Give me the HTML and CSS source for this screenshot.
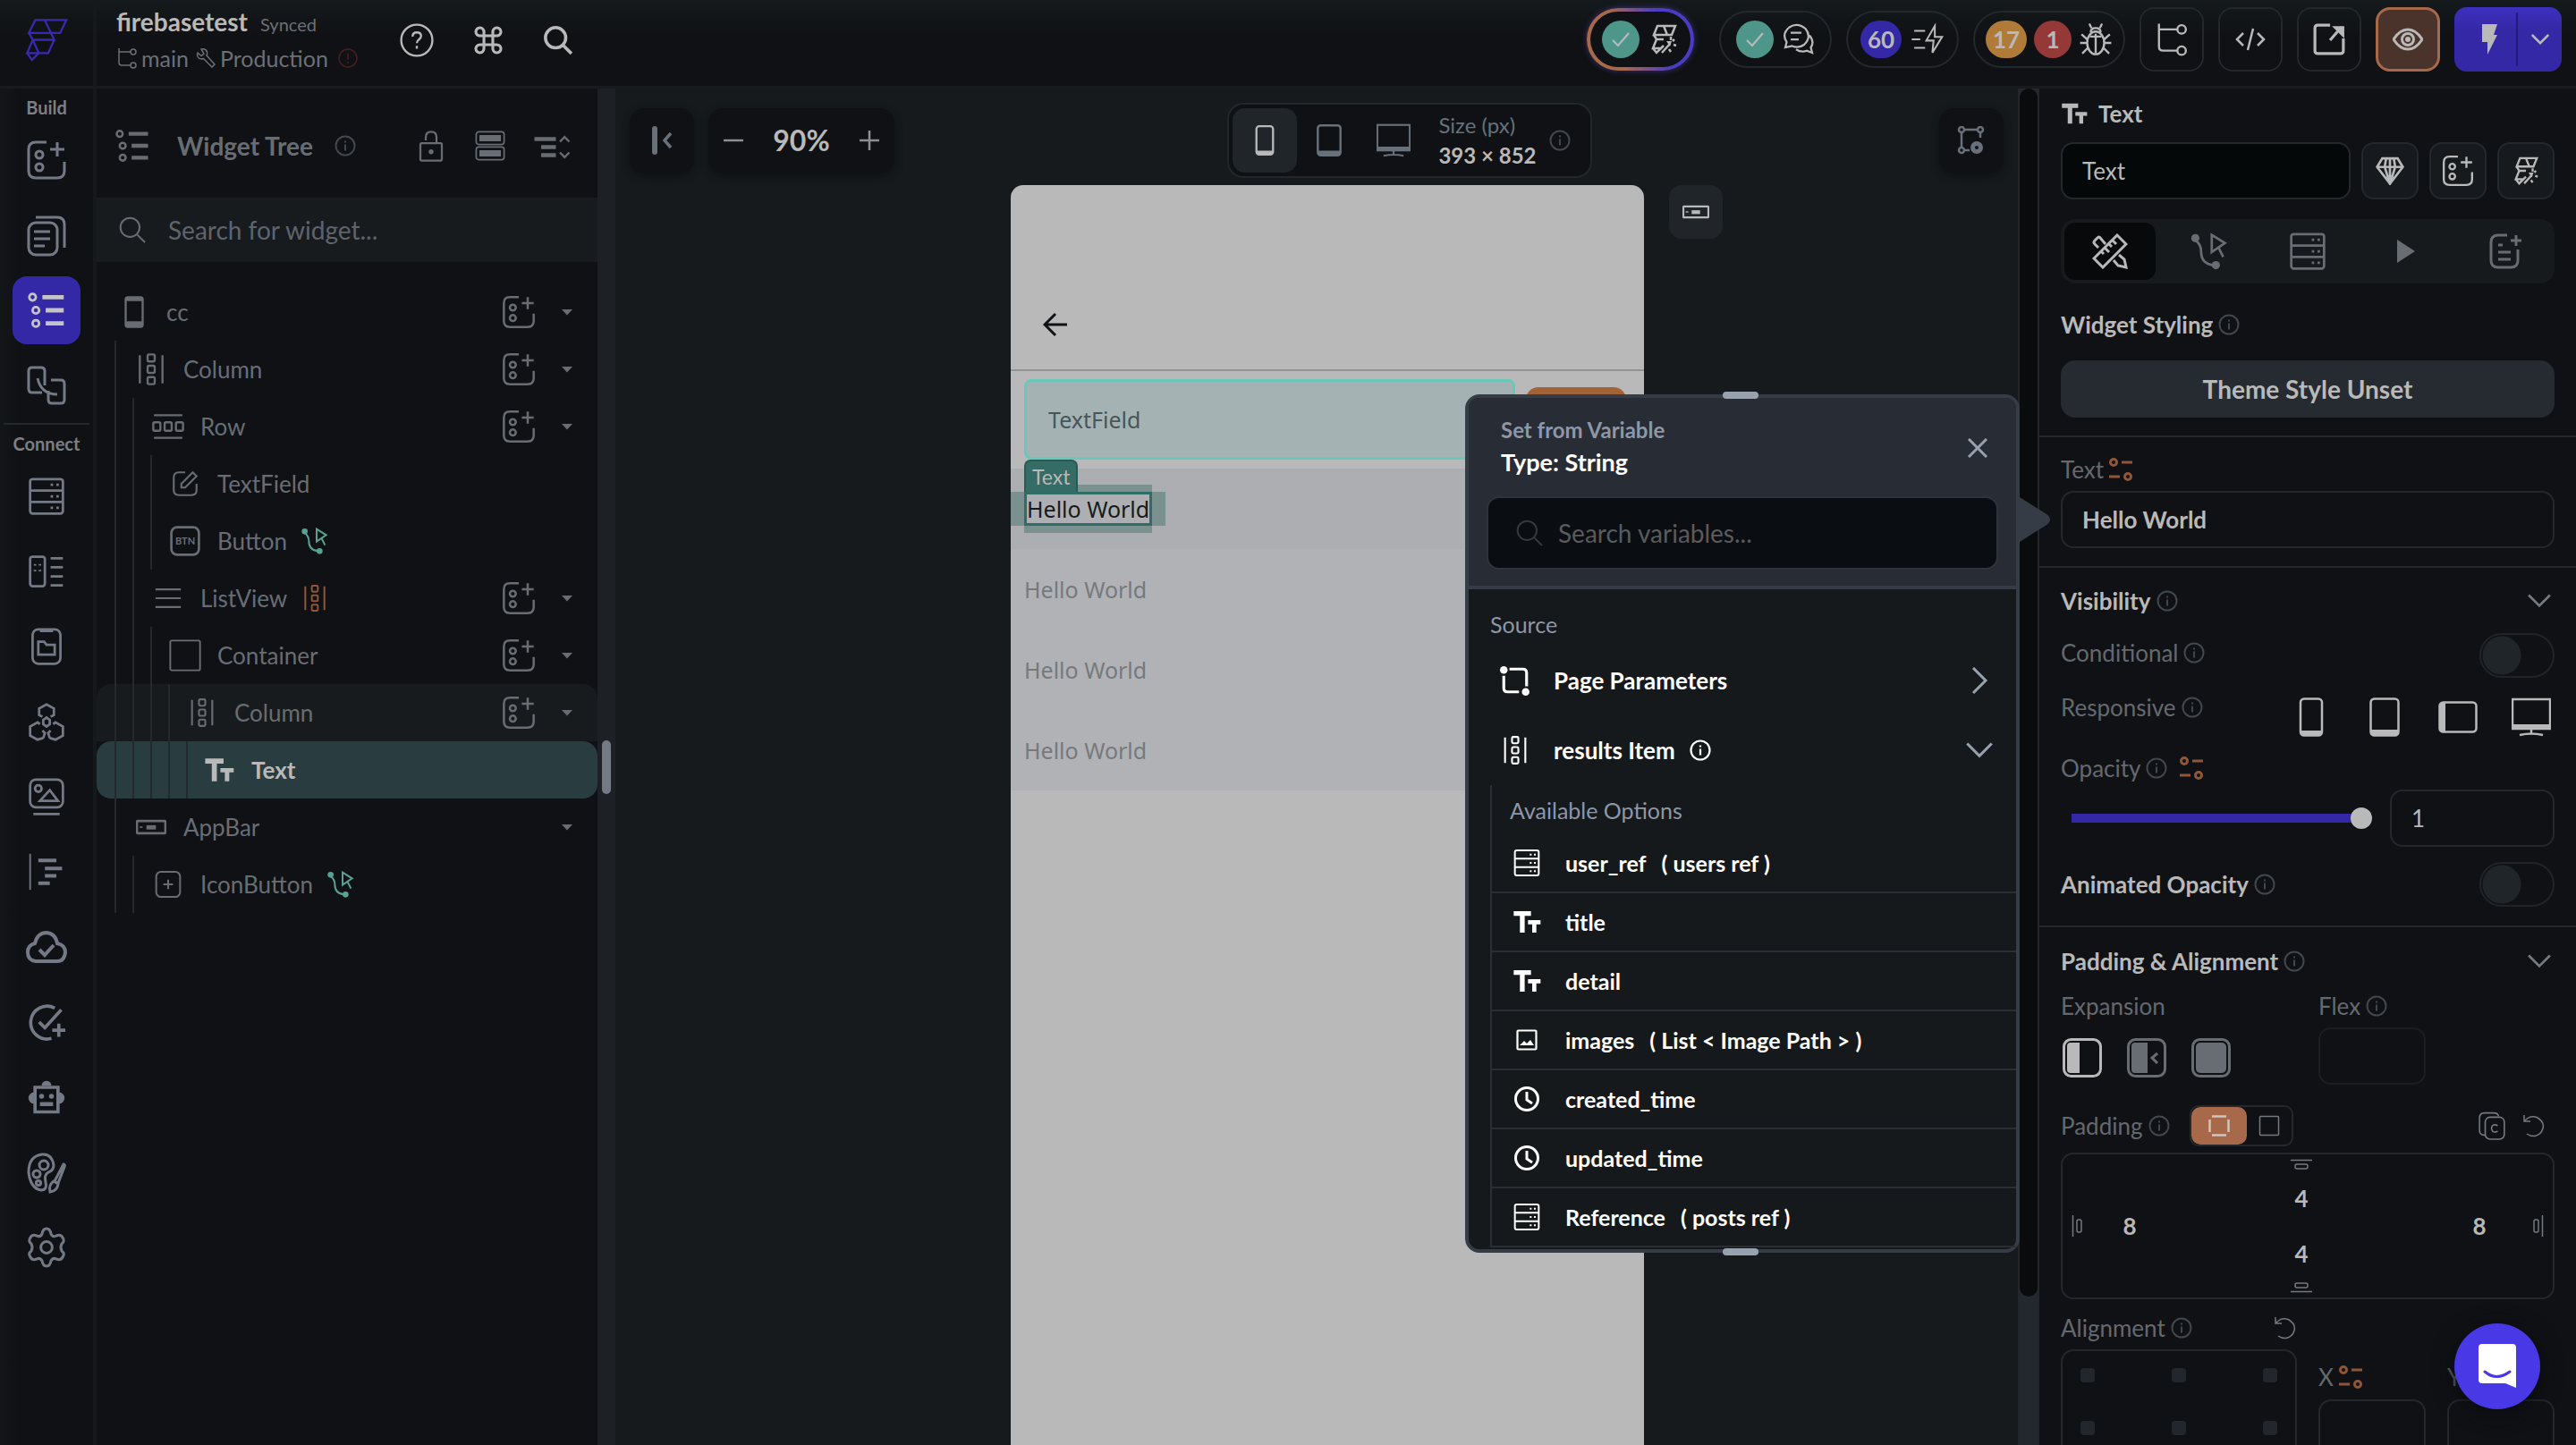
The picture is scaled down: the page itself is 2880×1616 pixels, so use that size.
FILE: index.html
```html
<!DOCTYPE html>
<html lang="en">
<head>
<meta charset="utf-8">
<title>firebasetest</title>
<link rel="stylesheet" href="styles.css">
</head>
<body>
<svg class="sprite" aria-hidden="true">
  <symbol id="logo" viewBox="0 0 48 50"><path d="M11 1.5H47L40 16.5H3.5ZM22 1.5L33 24.5H8L3.5 16.5M33 24.5L26 40H1.5L8 24.5L15 40M1.5 40L7 48L15 40" stroke-width="2.4"/></symbol>
  <symbol id="branch" viewBox="0 0 24 24"><path d="M3 1V17Q3 20 6 20H16M3 5H16"/><circle cx="19" cy="5" r="3"/><circle cx="19" cy="20" r="3"/></symbol>
  <symbol id="wrench" viewBox="0 0 24 24"><path d="M7 2Q12 1 13.500 5Q14 8 13 9L22 19L19 22L9.500 12.500Q5 14 3 10.500Q2 8 3 6L7 9.500L10 7Z"/></symbol>
  <symbol id="alert" viewBox="0 0 24 24"><circle cx="12" cy="12" r="10"/><path d="M12 6.500V14M12 16V18"/></symbol>
  <symbol id="info" viewBox="0 0 24 24"><circle cx="12" cy="12" r="10.500"/><path d="M12 10.500V17.500M12 6.500V8.500"/></symbol>
  <symbol id="help" viewBox="0 0 24 24"><circle cx="12" cy="12" r="11"/><path d="M9 9.500Q9 6.500 12 6.500Q15 6.500 15 9Q15 10.500 13.500 11.500Q12 12.500 12 14M12 16V18"/></symbol>
  <symbol id="cmd" viewBox="0 0 24 24"><path d="M8.500 8.500H15.500V15.500H8.500ZM8.500 8.500H5.500A3.200 3.200 0 1 1 8.500 5.500ZM15.500 8.500V5.500A3.200 3.200 0 1 1 18.500 8.500ZM15.500 15.500H18.500A3.200 3.200 0 1 1 15.500 18.500ZM8.500 15.500V18.500A3.200 3.200 0 1 1 5.500 15.500Z"/></symbol>
  <symbol id="search" viewBox="0 0 24 24"><circle cx="10" cy="10" r="8"/><path d="M16 16L22.500 22.500"/></symbol>
  <symbol id="add-widget" viewBox="0 0 24 24"><path d="M12 2H6Q2 2 2 6V18Q2 22 6 22H18Q22 22 22 18V13M18 2V10M14 6H22"/><circle cx="8" cy="9" r="2"/><circle cx="8" cy="16" r="2"/></symbol>
  <symbol id="pages" viewBox="0 0 24 24"><rect x="2" y="5" width="16" height="18" rx="4"/><path d="M5 10H14M5 14H14M5 18H11M6 2H18Q22 2 22 6V19"/></symbol>
  <symbol id="tree" viewBox="0 0 24 24"><circle cx="3.500" cy="4" r="2"/><circle cx="5.500" cy="12" r="2"/><circle cx="5.500" cy="20" r="2"/><path stroke-width="2.600" d="M9.500 4H22.500M11.500 12H22.500M11.500 20H22.500"/></symbol>
  <symbol id="flow" viewBox="0 0 24 24"><path d="M9.500 16H4Q2 16 2 14V4Q2 2 4 2H9Q11 2 11 4V12M14.500 9H20Q22 9 22 11V20Q22 22 20 22H15Q13 22 13 20V15M7 8Q9 17 18 17"/></symbol>
  <symbol id="db" viewBox="0 0 24 24"><rect x="2" y="1.500" width="20" height="21" rx="1.500"/><path d="M2 8.500H22M2 15.500H22M14.500 5H16M18 5H19.500M14.500 12H16M18 12H19.500M14.500 19H16M18 19H19.500"/></symbol>
  <symbol id="schema" viewBox="0 0 24 24"><rect x="2" y="3" width="9" height="18" rx="1.500"/><path d="M14.500 4H22M14.500 9.500H22M14.500 15H22M14.500 20.500H22M5 7.500V8.500M8 7.500V8.500M5 11V12M8 11V12"/></symbol>
  <symbol id="files" viewBox="0 0 24 24"><rect x="3.500" y="1.500" width="17" height="21" rx="3.500"/><path d="M8 2.500H16M7 9H10.500L12 11H17V17H7Z"/></symbol>
  <symbol id="hex" viewBox="0 0 24 24"><path d="M9.500 9L7.500 8V4L12 1.500L16.500 4V8L14.500 9M12 9.500L14 11V13.500L12 15L10 13.500V11ZM10 22L6.500 23L2 20.500V15L6.500 12.500L8 13.500M14 22L17.500 23L22 20.500V15L17.500 12.500L16 13.500M10 22L11 19L9.500 17.500M14 22L13 19L14.500 17.500"/></symbol>
  <symbol id="media" viewBox="0 0 24 24"><rect x="2" y="1.500" width="20" height="17" rx="3.500"/><circle cx="7" cy="7" r="2"/><path d="M8 14.500L14 8L19 14.500ZM4 22.500H20"/></symbol>
  <symbol id="locale" viewBox="0 0 24 24"><path stroke-width="1" d="M2 1V23"/><path d="M7 5H18M11 10H21.500M11 14.500H18M7 19H14"/></symbol>
  <symbol id="cloud" viewBox="0 0 24 24"><path stroke-width="2" d="M6 20Q1.500 19.500 1.500 15Q1.500 11 5.500 10Q7 4 12 4Q17 4.500 18 10Q22.500 11 22.500 15Q22 20 18 20ZM8 13.500L11 16.500L16 11"/></symbol>
  <symbol id="task" viewBox="0 0 24 24"><path stroke-width="2" d="M17 3.500A10 10 0 1 0 15 22M7.500 12L11 15.500L21 4.500M19.500 13V21M15.500 17H23.500"/></symbol>
  <symbol id="robot" viewBox="0 0 24 24"><path stroke-width="2" d="M5 6H19V21H5Z"/><path class="f" d="M9 5A3 3 0 0 1 15 5ZM4.500 9A3.500 3.500 0 0 0 4.500 16ZM19.500 9A3.500 3.500 0 0 1 19.500 16ZM8 15H16V17.500H8Z"/><circle class="f" cx="9" cy="11.500" r="1.500"/><circle class="f" cx="15" cy="11.500" r="1.500"/></symbol>
  <symbol id="palette" viewBox="0 0 24 24"><path d="M16 8Q15 1.500 9.500 2Q2 3 2 12Q3 21 9 22Q12.500 22 11.500 17.500Q10.500 13.500 13 12Q16 11 16 8ZM21.500 7.500Q22.500 7.500 22 9L18.500 18L16.500 17ZM16 17Q13 19 14 23Q18 22.500 18.500 18.500Z"/><circle cx="10.500" cy="8" r="2.500"/><circle cx="6.500" cy="13" r="2"/><circle cx="7.500" cy="18" r="1.300"/></symbol>
  <symbol id="gear" viewBox="0 0 24 24"><circle cx="12" cy="12" r="3.200"/><path d="M9.500 4.500Q10 1.500 12 1.500Q14 1.500 14.500 4.500Q15.500 6.500 17.500 5.500Q20 4.500 21 6.500Q22.500 8.500 20.500 10Q19.500 12 20.500 14Q22.500 15.500 21 17.500Q20 19.500 17.500 18.500Q15.500 17.500 14.500 19.500Q14 22.500 12 22.500Q10 22.500 9.500 19.500Q8.500 17.500 6.500 18.500Q4 19.500 3 17.500Q1.500 15.500 3.500 14Q4.500 12 3.500 10Q1.500 8.500 3 6.500Q4 4.500 6.500 5.500Q8.500 6.500 9.500 4.500Z"/></symbol>
  <symbol id="lock" viewBox="0 0 24 24"><rect x="4" y="10" width="16" height="13" rx="1"/><path d="M8 8V5.500Q8 1.500 12 1.500Q16 1.500 16 5.500V10"/><circle class="f" cx="12" cy="16.500" r="1.800"/></symbol>
  <symbol id="stack" viewBox="0 0 24 24"><rect x="1" y="1" width="22" height="10" rx="2"/><rect x="1" y="13" width="22" height="10" rx="2"/><path class="f" d="M3.500 3.500H20.500V8.500H3.500ZM3.500 15.500H20.500V20.500H3.500Z"/></symbol>
  <symbol id="collapse" viewBox="0 0 28 20"><path d="M1 5H17M6 11H17M6 17H17"/><path stroke-width="1.600" d="M20 7L23.500 3.500L27 7M20 15L23.500 18.500L27 15"/></symbol>
  <symbol id="phone-s" viewBox="0 0 24 24"><rect x="6" y="1.500" width="12" height="21" rx="1.500"/><path d="M6 3H18" stroke-width="2.500"/><path d="M6 20.500H18" stroke-width="4"/></symbol>
  <symbol id="col" viewBox="0 0 24 24"><path d="M4 2V22M20 2V22"/><rect x="9.500" y="1.500" width="5" height="5" rx="1"/><rect x="9.500" y="9.500" width="5" height="5" rx="1"/><rect x="9.500" y="17.500" width="5" height="5" rx="1"/></symbol>
  <symbol id="row" viewBox="0 0 24 24"><path d="M2 4H22M2 20H22"/><rect x="1.500" y="9" width="5" height="6" rx="1"/><rect x="9.500" y="9" width="5" height="6" rx="1"/><rect x="17.500" y="9" width="5" height="6" rx="1"/></symbol>
  <symbol id="edit" viewBox="0 0 24 24"><path d="M12 3H7Q3 3 3 7V17Q3 21 7 21H17Q21 21 21 17V12M9 12L18 3L21 6L12 15H9Z"/></symbol>
  <symbol id="btn" viewBox="0 0 32 32"><rect x="1.500" y="1.500" width="29" height="29" rx="6"/></symbol>
  <symbol id="action" viewBox="0 0 24 24"><circle class="f" cx="3.500" cy="4" r="2.500"/><circle class="f" cx="16" cy="20.500" r="2.500"/><path d="M3.500 5Q7 8 7 12Q7 20 15 20.500M13.500 2L21.500 7L13.500 12.500ZM17.500 9.500L20.500 15.500"/></symbol>
  <symbol id="list" viewBox="0 0 24 24"><path d="M2 5H22M2 12H22M2 19H22"/></symbol>
  <symbol id="box" viewBox="0 0 24 24"><rect x="1.500" y="1.500" width="21" height="21" rx="1"/></symbol>
  <symbol id="tt" viewBox="0 0 24 24"><path class="f" d="M1 3H15.500V7H10.200V21H6.200V7H1ZM13 10.500H23.500V14H20V21H16.500V14H13Z"/></symbol>
  <symbol id="appbar" viewBox="0 0 32 16"><rect x="1" y="1.500" width="30" height="13" rx="1"/><path class="f" d="M11 6H21V10.500H11Z"/><path stroke-width="1.500" d="M4 8H7"/></symbol>
  <symbol id="plusbox" viewBox="0 0 24 24"><rect x="2" y="1.500" width="20" height="21" rx="4"/><path d="M12 8V16M8 12H16"/></symbol>
  <symbol id="caret" viewBox="0 0 12 8"><path class="f" d="M0 1H12L6 7.500Z"/></symbol>
  <symbol id="left" viewBox="0 0 24 34"><path stroke-width="6" stroke-linecap="round" d="M4 4V30"/><path stroke-width="3.500" d="M22 9L15 17L22 25"/></symbol>
  <symbol id="minus" viewBox="0 0 24 24"><path d="M1 12H23"/></symbol>
  <symbol id="plus" viewBox="0 0 24 24"><path d="M1 12H23M12 1V23"/></symbol>
  <symbol id="phone" viewBox="0 0 28 44"><rect x="2" y="1.500" width="24" height="41" rx="4"/><path class="f" d="M2 37H26V40Q26 43 23 43H5Q2 43 2 40Z"/></symbol>
  <symbol id="tablet" viewBox="0 0 34 44"><rect x="1.500" y="1.500" width="31" height="41" rx="4"/><path class="f" d="M1.500 36H32.500V39Q32 43 29 43H5Q2 43 1.500 39Z"/></symbol>
  <symbol id="land" viewBox="0 0 44 36"><rect x="1.500" y="1.500" width="41" height="33" rx="4"/><path class="f" d="M8 1.500V34.500H5Q1.500 34 1.500 31V5Q1.500 2 5 1.500Z"/></symbol>
  <symbol id="desk" viewBox="0 0 44 42"><rect x="1" y="1" width="42" height="33"/><path class="f" d="M1 29H43V34H1Z"/><path d="M22 34V39M9 41Q22 38 35 41"/></symbol>
  <symbol id="nodes" viewBox="0 0 30 32"><circle cx="4" cy="4" r="3"/><circle cx="25" cy="4" r="3"/><circle cx="4" cy="27" r="3"/><path d="M7 4H22M4 7V24M25 7V13M7 27H13"/><circle cx="21" cy="24" r="4.500" stroke-width="5"/></symbol>
  <symbol id="back" viewBox="0 0 28 28"><path d="M27 14H2M14 2L2 14L14 26"/></symbol>
  <symbol id="check" viewBox="0 0 24 24"><path d="M3 13L9 19L21 5"/></symbol>
  <symbol id="ai" viewBox="0 0 30 34"><path d="M8 2H28L24 12H4ZM15 2L19 12M4 12L7 17H15M7 17L3 27H13M3 27L7 32L15 24M13 32L22 22M23 14V18M27 17L25 19M26 23L29 24M21 28L23 31"/><path class="f" d="M18 19L24 19L22 25Z"/></symbol>
  <symbol id="chat" viewBox="0 0 24 24"><path d="M2 18L3 14Q-1 8 5 3Q11 -1 17 4Q22 10 16 16Q12 19 7 17ZM6 7H14M6 12H12M20 9Q24 14 21 18L22 22L18 20.500Q14 22 10 19.500"/></symbol>
  <symbol id="speed" viewBox="0 0 28 24"><path d="M1 12H8M3 5H12M3 19H12M20 1L13 13H19L18 23L26 10H20Z"/></symbol>
  <symbol id="bug" viewBox="0 0 24 24"><ellipse cx="12" cy="14.500" rx="6" ry="8"/><path d="M12 8V22M8.500 7Q8.500 4 12 4Q15.500 4 15.500 7M9 4L7.500 1M15 4L16.500 1M6 12L2 8.500M18 12L22 8.500M1 14.500H6M18 14.500H23M6.500 18L2.500 22M17.500 18L21.500 22M8 10H16"/></symbol>
  <symbol id="code" viewBox="0 0 34 26"><path d="M9 6L2 13L9 20M25 6L32 13L25 20M20 1L14 25"/></symbol>
  <symbol id="open" viewBox="0 0 34 34"><path d="M18 2H5Q2 2 2 5V29Q2 32 5 32H29Q32 32 32 29V16M18 18L30 4"/><path class="f" d="M20 3H33V16Z"/></symbol>
  <symbol id="eye" viewBox="0 0 34 24"><path d="M1 12Q8 1 17 1Q26 1 33 12Q26 23 17 23Q8 23 1 12Z"/><circle cx="17" cy="12" r="6.500"/><circle class="f" cx="17" cy="12" r="3"/></symbol>
  <symbol id="bolt" viewBox="0 0 20 34"><path class="f" d="M2 0H19L15 12H19L8 34V20H2Z"/></symbol>
  <symbol id="down" viewBox="0 0 24 14"><path d="M1 1L12 12L23 1"/></symbol>
  <symbol id="right" viewBox="0 0 18 30"><path d="M2 1L16 15L2 29"/></symbol>
  <symbol id="gem" viewBox="0 0 30 30"><path d="M7 2H23L28.500 11L15 28.500L1.500 11ZM1.500 11H28.500M11 2L9.500 11L15 28.500L20.500 11L19 2M15 2V28"/></symbol>
  <symbol id="design" viewBox="0 0 40 40"><path d="M28 2L38 12L12 38L2 28ZM10 20L13 23M14 16L19 21M19 12L22 15M23 8L27 12M15 12L9 5Q8 3 6 5L3 8Q1 10 3 12L7 16M30 24L36 29L38 38L29 36L24 30"/></symbol>
  <symbol id="play" viewBox="0 0 20 28"><path class="f" d="M0 1L20 14L0 27Z"/></symbol>
  <symbol id="notes" viewBox="0 0 36 40"><path d="M20 2H10Q2 2 2 10V30Q2 38 10 38H24Q32 38 32 30V18M30 2V14M24 8H36M10 13H15M10 21H24M10 29H24"/></symbol>
  <symbol id="vars" viewBox="0 0 26 26"><circle cx="5" cy="5" r="3.500"/><circle cx="21" cy="21" r="3.500"/><path d="M14 5H26M0 21H12"/></symbol>
  <symbol id="close" viewBox="0 0 22 22"><path d="M1 1L21 21M21 1L1 21"/></symbol>
  <symbol id="params" viewBox="0 0 32 32"><circle class="f" cx="4" cy="5" r="4"/><circle class="f" cx="27" cy="28" r="4"/><path d="M10 4H24Q28 4 28 8V22M4 11V24Q4 28 8 28H20"/></symbol>
  <symbol id="image" viewBox="0 0 24 24"><rect x="1.500" y="1.500" width="21" height="21" rx="1"/><path class="f" d="M4 18L9 13L12 16L16 12L20 18Z"/></symbol>
  <symbol id="clock" viewBox="0 0 28 28"><circle cx="14" cy="14" r="12.500"/><path d="M14 6V15L20 19"/></symbol>
  <symbol id="exp-a" viewBox="0 0 44 44"><rect x="1.500" y="1.500" width="41" height="41" rx="8"/><path class="f" d="M9 5H19V39H9Q5 39 5 35V9Q5 5 9 5Z"/></symbol>
  <symbol id="exp-b" viewBox="0 0 44 44"><rect x="1.500" y="1.500" width="41" height="41" rx="8"/><path class="f" d="M9 5H23V39H9Q5 39 5 35V9Q5 5 9 5Z"/><path d="M34 17L28 22L34 28"/></symbol>
  <symbol id="exp-c" viewBox="0 0 44 44"><rect x="1.500" y="1.500" width="41" height="41" rx="8"/><rect class="f" x="5" y="5" width="34" height="34" rx="5"/></symbol>
  <symbol id="sides" viewBox="0 0 24 24"><path stroke-width="2.500" d="M4 1.500H20M4 22.500H20M1.500 5V19M22.500 5V19"/></symbol>
  <symbol id="copy" viewBox="0 0 30 30"><rect x="8" y="6" width="20" height="23" rx="5"/><path d="M8 25Q2 25 2 20V7Q2 1.500 7 1.500H17Q21 1.500 22 5M21 15Q18 13 15.500 15Q13.500 18 16 21Q18.500 22.500 21 20.500"/></symbol>
  <symbol id="undo" viewBox="0 0 24 26"><path d="M1 1V8H8M1 8Q8 0 16 4Q24 9 22 16Q20 23 13 24.500Q8 25 4 22"/></symbol>
  <symbol id="pad" viewBox="0 0 24 12"><path d="M0 1.500H24"/><rect x="5" y="6" width="14" height="5" rx="2"/></symbol>
  <symbol id="intercom" viewBox="0 0 42 50"><path class="f" d="M4 0H38Q42 0 42 4V49L30 44H4Q0 44 0 40V4Q0 0 4 0Z"/><path class="smile" d="M7 31Q20 42 35 31"/></symbol>
</svg>

<header class="topbar">
  <a class="logo" href="#" aria-label="Home"><svg class="i48"><use href="#logo"/></svg></a>
  <div class="project">
    <div class="line"><h1>firebasetest</h1><span class="synced">Synced</span></div>
    <div class="line sub"><svg class="i24"><use href="#branch"/></svg><span>main</span><svg class="i24"><use href="#wrench"/></svg><span>Production</span><svg class="i24 warn"><use href="#alert"/></svg></div>
  </div>
  <nav class="tools">
    <button aria-label="Help"><svg class="i38"><use href="#help"/></svg></button>
    <button aria-label="Commands"><svg class="i34 heavy"><use href="#cmd"/></svg></button>
    <button aria-label="Search"><svg class="i34 raw"><use href="#search"/></svg></button>
  </nav>
  <div class="status">
    <button class="pill glow" aria-label="AI"><span class="dot teal"><svg class="i24 heavy"><use href="#check"/></svg></span><svg class="i34 raw"><use href="#ai"/></svg></button>
    <button class="pill" aria-label="Comments"><span class="dot teal"><svg class="i24 heavy"><use href="#check"/></svg></span><svg class="i36"><use href="#chat"/></svg></button>
    <button class="pill"><span class="dot blue">60</span><svg class="i38"><use href="#speed"/></svg></button>
    <button class="pill wide"><span class="dot orange">17</span><span class="dot red">1</span><svg class="i38"><use href="#bug"/></svg></button>
    <button class="sq" aria-label="Branch"><svg class="i38"><use href="#branch"/></svg></button>
    <button class="sq" aria-label="Code"><svg class="i34 raw"><use href="#code"/></svg></button>
    <button class="sq" aria-label="Open"><svg class="i36 raw3"><use href="#open"/></svg></button>
    <button class="sq eye" aria-label="Preview"><svg class="i34 raw3"><use href="#eye"/></svg></button>
    <div class="run"><button aria-label="Run"><svg class="i34"><use href="#bolt"/></svg></button><button class="more" aria-label="More"><svg class="i20 raw3"><use href="#down"/></svg></button></div>
  </div>
</header>

<main class="workspace">
  <nav class="rail">
    <h2>Build</h2>
    <button aria-label="Add widget"><svg class="i48"><use href="#add-widget"/></svg></button>
    <button aria-label="Pages"><svg class="i48"><use href="#pages"/></svg></button>
    <button aria-label="Widget tree" class="on"><span><svg class="i44"><use href="#tree"/></svg></span></button>
    <button aria-label="Storyboard"><svg class="i48"><use href="#flow"/></svg></button>
    <hr>
    <h2>Connect</h2>
    <button aria-label="Firestore"><svg class="i44"><use href="#db"/></svg></button>
    <button aria-label="Data types"><svg class="i44"><use href="#schema"/></svg></button>
    <button aria-label="App state"><svg class="i44"><use href="#files"/></svg></button>
    <button aria-label="API"><svg class="i44"><use href="#hex"/></svg></button>
    <button aria-label="Media"><svg class="i44"><use href="#media"/></svg></button>
    <button aria-label="Functions"><svg class="i44 heavy"><use href="#locale"/></svg></button>
    <button aria-label="Cloud"><svg class="i48"><use href="#cloud"/></svg></button>
    <button aria-label="Tests"><svg class="i44"><use href="#task"/></svg></button>
    <button aria-label="Agents"><svg class="i44"><use href="#robot"/></svg></button>
    <button aria-label="Theme"><svg class="i48"><use href="#palette"/></svg></button>
    <button aria-label="Settings"><svg class="i48"><use href="#gear"/></svg></button>
  </nav>

  <section class="treepanel">
    <div class="treehead">
      <svg class="i40"><use href="#tree"/></svg><h2>Widget Tree</h2><svg class="i24 dim"><use href="#info"/></svg>
      <div class="treeacts"><button aria-label="Lock"><svg class="i36"><use href="#lock"/></svg></button><button aria-label="Density"><svg class="i34 thin"><use href="#stack"/></svg></button><button aria-label="Collapse all"><svg class="i42 raw3"><use href="#collapse"/></svg></button></div>
    </div>
    <label class="treesearch"><svg class="i32"><use href="#search"/></svg><input type="text" placeholder="Search for widget..." aria-label="Search for widget"></label>
    <ul class="tree">
      <li class="d0"><svg class="i38 ic"><use href="#phone-s"/></svg><span>cc</span><button class="add" aria-label="Add"><svg class="i40"><use href="#add-widget"/></svg></button><button class="car" aria-label="Toggle"><svg class="i12"><use href="#caret"/></svg></button></li>
      <li class="d1"><svg class="i38 ic"><use href="#col"/></svg><span>Column</span><button class="add" aria-label="Add"><svg class="i40"><use href="#add-widget"/></svg></button><button class="car" aria-label="Toggle"><svg class="i12"><use href="#caret"/></svg></button></li>
      <li class="d2"><svg class="i38 ic"><use href="#row"/></svg><span>Row</span><button class="add" aria-label="Add"><svg class="i40"><use href="#add-widget"/></svg></button><button class="car" aria-label="Toggle"><svg class="i12"><use href="#caret"/></svg></button></li>
      <li class="d3"><svg class="i34 ic"><use href="#edit"/></svg><span>TextField</span></li>
      <li class="d3"><b class="ic btnic"><svg class="i34 raw"><use href="#btn"/></svg><small>BTN</small></b><span>Button</span><svg class="i32 green"><use href="#action"/></svg></li>
      <li class="d2"><svg class="i34 ic"><use href="#list"/></svg><span>ListView</span><svg class="i32 rust"><use href="#col"/></svg><button class="add" aria-label="Add"><svg class="i40"><use href="#add-widget"/></svg></button><button class="car" aria-label="Toggle"><svg class="i12"><use href="#caret"/></svg></button></li>
      <li class="d3"><svg class="i38 ic thin"><use href="#box"/></svg><span>Container</span><button class="add" aria-label="Add"><svg class="i40"><use href="#add-widget"/></svg></button><button class="car" aria-label="Toggle"><svg class="i12"><use href="#caret"/></svg></button></li>
      <li class="d4 hover"><svg class="i34 ic"><use href="#col"/></svg><span>Column</span><button class="add" aria-label="Add"><svg class="i40"><use href="#add-widget"/></svg></button><button class="car" aria-label="Toggle"><svg class="i12"><use href="#caret"/></svg></button></li>
      <li class="d5 sel"><svg class="i34 ic"><use href="#tt"/></svg><span>Text</span></li>
      <li class="d1"><svg class="i34 ic raw"><use href="#appbar"/></svg><span>AppBar</span><button class="car" aria-label="Toggle"><svg class="i12"><use href="#caret"/></svg></button></li>
      <li class="d2"><svg class="i32 ic"><use href="#plusbox"/></svg><span>IconButton</span><svg class="i32 green"><use href="#action"/></svg></li>
    </ul>
  </section>
  <div class="splitter"><i></i></div>

  <section class="canvas">
    <div class="bar">
      <button class="float sqf" aria-label="Collapse panel"><svg class="i34 gray"><use href="#left"/></svg></button>
      <div class="float zoom"><button aria-label="Zoom out"><svg class="i24"><use href="#minus"/></svg></button><output>90%</output><button aria-label="Zoom in"><svg class="i24"><use href="#plus"/></svg></button></div>
      <div class="devices">
        <button class="on" aria-label="Phone"><svg class="i34 raw3"><use href="#phone"/></svg></button>
        <button aria-label="Tablet"><svg class="i36 raw3"><use href="#tablet"/></svg></button>
        <button aria-label="Desktop"><svg class="i38 raw"><use href="#desk"/></svg></button>
        <p><span>Size (px)</span><strong>393 × 852</strong></p>
        <svg class="i24 dim"><use href="#info"/></svg>
      </div>
      <button class="float sqf" aria-label="Canvas settings"><svg class="i32 raw gray"><use href="#nodes"/></svg></button>
    </div>
    <div class="stage">
      <div class="phone">
        <div class="appbar"><svg class="i28 raw3"><use href="#back"/></svg></div>
        <div class="formrow"><input type="text" placeholder="TextField" aria-label="TextField"><button aria-label="Button"></button></div>
        <ul class="list">
          <li class="first"><div class="picked"><em>Text</em>Hello World</div></li>
          <li>Hello World</li>
          <li>Hello World</li>
          <li>Hello World</li>
        </ul>
      </div>
      <button class="addbar" aria-label="App bar"><svg class="i30 raw"><use href="#appbar"/></svg></button>
    </div>
  </section>
  <div class="scroll"><i></i></div>

  <aside class="props">
    <section class="p1">
      <h2><svg class="i30"><use href="#tt"/></svg>Text</h2>
      <div class="namerow"><input type="text" value="Text" aria-label="Widget name"><button aria-label="Theme widget"><svg class="i32 raw"><use href="#gem"/></svg></button><button aria-label="Convert"><svg class="i38"><use href="#add-widget"/></svg></button><button aria-label="AI"><svg class="i32 raw"><use href="#ai"/></svg></button></div>
      <div class="tabs"><button class="on" aria-label="Properties"><svg class="i40 raw3"><use href="#design"/></svg></button><button aria-label="Actions"><svg class="i44"><use href="#action"/></svg></button><button aria-label="Backend query"><svg class="i44"><use href="#db"/></svg></button><button aria-label="Animations"><svg class="i28"><use href="#play"/></svg></button><button aria-label="Documentation"><svg class="i40 raw3"><use href="#notes"/></svg></button></div>
      <h3>Widget Styling <svg class="i24 dim"><use href="#info"/></svg></h3>
      <button class="theme">Theme Style Unset</button>
    </section>
    <section class="p2">
      <label for="txt">Text <svg class="i26 raw3 rust"><use href="#vars"/></svg></label>
      <input id="txt" type="text" value="Hello World">
    </section>
    <section class="p3">
      <h3>Visibility <svg class="i24 dim"><use href="#info"/></svg><svg class="i26 raw chev"><use href="#down"/></svg></h3>
      <div class="r cond"><label for="cond">Conditional <svg class="i24 dim"><use href="#info"/></svg></label><input id="cond" type="checkbox"></div>
      <div class="r resp"><span>Responsive <svg class="i24 dim"><use href="#info"/></svg></span><div class="devs"><button aria-label="Phone"><svg class="i44 raw"><use href="#phone"/></svg></button><button aria-label="Tablet"><svg class="i44 raw"><use href="#tablet"/></svg></button><button aria-label="Tablet landscape"><svg class="i44 raw"><use href="#land"/></svg></button><button aria-label="Desktop"><svg class="i44 raw"><use href="#desk"/></svg></button></div></div>
      <label class="opl" for="op">Opacity <svg class="i24 dim"><use href="#info"/></svg><svg class="i26 raw3 rust vgap"><use href="#vars"/></svg></label>
      <div class="r slide"><input id="op" type="range" min="0" max="1" step="0.01" value="1"><input type="text" value="1" aria-label="Opacity value"></div>
      <div class="r anim"><label for="anim" class="strong">Animated Opacity <svg class="i24 dim"><use href="#info"/></svg></label><input id="anim" type="checkbox"></div>
    </section>
    <section class="p4">
      <h3>Padding &amp; Alignment <svg class="i24 dim"><use href="#info"/></svg><svg class="i26 raw chev"><use href="#down"/></svg></h3>
      <div class="expand">
        <div><span class="lab">Expansion</span><div class="exps"><button class="on" aria-label="None"><svg class="i44 raw3"><use href="#exp-a"/></svg></button><button aria-label="Flexible"><svg class="i44 raw3"><use href="#exp-b"/></svg></button><button aria-label="Expanded"><svg class="i44 raw3"><use href="#exp-c"/></svg></button></div></div>
        <div><label class="lab" for="flex">Flex <svg class="i24 dim"><use href="#info"/></svg></label><input class="faint" id="flex" type="text"></div>
      </div>
      <div class="padrow"><span class="lab">Padding <svg class="i24 dim"><use href="#info"/></svg></span><div class="seg"><button class="on" aria-label="Per side"><svg class="i24"><use href="#sides"/></svg></button><button aria-label="All sides"><svg class="i24"><use href="#box"/></svg></button></div><button class="push" aria-label="Copy"><svg class="i32"><use href="#copy"/></svg></button><button aria-label="Reset"><svg class="i26"><use href="#undo"/></svg></button></div>
      <div class="padbox">
        <svg class="i24 pt"><use href="#pad"/></svg>
        <input class="nt" value="4" aria-label="Top">
        <svg class="i24 pl"><use href="#pad"/></svg><input class="nl" value="8" aria-label="Left">
        <input class="nr" value="8" aria-label="Right"><svg class="i24 pr"><use href="#pad"/></svg>
        <input class="nb" value="4" aria-label="Bottom">
        <svg class="i24 pb"><use href="#pad"/></svg>
      </div>
      <div class="align">
        <div><div class="lab">Alignment <svg class="i24 dim"><use href="#info"/></svg><button class="push" aria-label="Reset"><svg class="i26"><use href="#undo"/></svg></button></div>
          <div class="dots"><input type="radio" name="al" aria-label="Top left"><input type="radio" name="al" aria-label="Top center"><input type="radio" name="al" aria-label="Top right"><input type="radio" name="al" aria-label="Center left"><input type="radio" name="al" aria-label="Center"><input type="radio" name="al" aria-label="Center right"><input type="radio" name="al" aria-label="Bottom left"><input type="radio" name="al" aria-label="Bottom center"><input type="radio" name="al" aria-label="Bottom right"></div></div>
        <div class="xy"><label for="ax">X <svg class="i26 raw3 rust"><use href="#vars"/></svg></label><input id="ax" type="text"></div>
        <div class="xy"><label for="ay">Y <svg class="i26 raw3 rust"><use href="#vars"/></svg></label><input id="ay" type="text"></div>
      </div>
    </section>
  </aside>

  <div class="popover" role="dialog" aria-label="Set from Variable">
    <i class="grip top"></i><i class="grip bottom"></i><svg class="tip" viewBox="0 0 36 50"><path class="f" d="M0 0L30 19Q38 25 30 31L0 50Z"/></svg>
    <div class="pophead">
      <div class="poptitle"><div><p>Set from Variable</p><h2>Type: String</h2></div><button aria-label="Close"><svg class="i22 raw3"><use href="#close"/></svg></button></div>
      <label class="popsearch"><svg class="i32"><use href="#search"/></svg><input type="text" placeholder="Search variables..." aria-label="Search variables"></label>
    </div>
    <div class="popbody">
      <p class="src">Source</p>
      <button class="srcrow"><svg class="i34 raw3"><use href="#params"/></svg><span>Page Parameters</span><svg class="i30 raw3 end"><use href="#right"/></svg></button>
      <button class="srcrow"><svg class="i34"><use href="#col"/></svg><span>results Item</span><svg class="i24 heavy"><use href="#info"/></svg><svg class="i30 raw end"><use href="#down"/></svg></button>
      <div class="opts">
        <p>Available Options</p>
        <ul>
          <li><svg class="i32"><use href="#db"/></svg><span>user_ref</span><span>( users ref )</span></li>
          <li><svg class="i32"><use href="#tt"/></svg><span>title</span></li>
          <li><svg class="i32"><use href="#tt"/></svg><span>detail</span></li>
          <li><svg class="i24 heavy"><use href="#image"/></svg><span>images</span><span>( List &lt; Image Path &gt; )</span></li>
          <li><svg class="i28 raw3"><use href="#clock"/></svg><span>created_time</span></li>
          <li><svg class="i28 raw3"><use href="#clock"/></svg><span>updated_time</span></li>
          <li><svg class="i32"><use href="#db"/></svg><span>Reference</span><span>( posts ref )</span></li>
        </ul>
      </div>
    </div>
  </div>
</main>
<button class="intercom" aria-label="Open chat"><svg class="i50"><use href="#intercom"/></svg></button>
</body>
</html>
```
FILE: styles.css
```css
* { box-sizing: border-box; margin: 0; padding: 0; }
body { height: 100vh; display: flex; flex-direction: column; overflow: hidden; background: #101115; color: #b9b9b9; font: 26px/32px Lato, "Open Sans", sans-serif; }
button { background: none; border: 0; color: inherit; font: inherit; display: flex; align-items: center; justify-content: center; }
input { font: inherit; color: inherit; background: none; border: 0; outline: 0; min-width: 0; }
h1, h2, h3 { font-size: inherit; font-weight: 700; }
ul { list-style: none; }
em, i { font-style: normal; }
.sprite { display: none; }
svg { display: block; flex: none; fill: none; stroke: currentColor; stroke-width: 1.5; }
.f { fill: currentColor; stroke: none; }
.smile { stroke: #4838e6; stroke-width: 3; stroke-linecap: round; }
.heavy { stroke-width: 2.2; }
.thin { stroke-width: 1.2; }
.raw { stroke-width: 2.5; }
.raw3 { stroke-width: 3; }
.i12 { width: 12px; height: 12px; }
.i20 { width: 20px; height: 20px; }
.i22 { width: 22px; height: 22px; }
.i24 { width: 24px; height: 24px; }
.i26 { width: 26px; height: 26px; }
.i28 { width: 28px; height: 28px; }
.i30 { width: 30px; height: 30px; }
.i32 { width: 32px; height: 32px; }
.i34 { width: 34px; height: 34px; }
.i36 { width: 36px; height: 36px; }
.i38 { width: 38px; height: 38px; }
.i40 { width: 40px; height: 40px; }
.i42 { width: 42px; height: 42px; }
.i44 { width: 44px; height: 44px; }
.i48 { width: 48px; height: 48px; }
.i50 { width: 50px; height: 50px; }
.dim { color: #40484d; stroke-width: 2; }
.gray { color: #68707a; }
.rust { color: #8f5638; }
.green { color: #57a294; }
.warn { color: #4a1e20; }

/* top bar */
.topbar { display: flex; align-items: center; height: 99px; flex: none; border-bottom: 3px solid #171b1e; background: linear-gradient(#141a1c, #101115 40px); }
.logo { display: flex; justify-content: center; align-items: center; width: 108px; align-self: stretch; border-right: 4px solid #16191c; color: #382aae; padding-bottom: 6px; }
.project { padding: 0 0 8px 22px; display: flex; flex-direction: column; gap: 6px; width: 325px; }
.line { display: flex; align-items: baseline; gap: 14px; }
.line.sub { align-items: center; gap: 4px; font-size: 25px; color: #6b7075; }
.line.sub svg + span + svg { margin-left: 3px; }
.line.sub .warn { margin-left: 6px; }
h1 { font-size: 28px; }
.synced { font-size: 20px; color: #6b7075; }
.tools { display: flex; gap: 44px; margin-left: 14px; padding-bottom: 6px; }
.status { display: flex; gap: 16px; margin-left: auto; padding-right: 16px; align-items: center; padding-bottom: 8px; }
.pill { height: 64px; border: 2px solid #22282c; border-radius: 32px; padding: 0 8px; gap: 10px; min-width: 126px; }
.pill.wide { min-width: 170px; gap: 8px; }
.pill.glow { height: 70px; border: 4px solid transparent; border-radius: 36px; min-width: 120px; margin-right: 12px; background: linear-gradient(#101115, #101115) padding-box, linear-gradient(75deg, #a8694a 30%, #4a3cc4 70%) border-box; box-shadow: 0 0 6px #3c2f78; }
.dot { display: flex; align-items: center; justify-content: center; min-width: 42px; height: 42px; border-radius: 21px; padding: 0 8px; font-weight: 700; }
.teal { background: #4f968a; }
.blue { background: #3528a6; }
.orange { background: #b07a38; }
.red { background: #943838; }
.sq { width: 72px; height: 72px; border: 2px solid #22282c; border-radius: 16px; }
.sq.eye { background: #4a332a; border: 3px solid #a8694a; }
.run { display: flex; background: linear-gradient(#3d30c0, #3528a6 24px); border-radius: 14px; height: 72px; align-items: center; }
.run button { width: 69px; height: 60px; padding-left: 8px; }
.run .more { width: 51px; padding: 0; border-left: 2px solid #231a75; }

/* workspace */
.workspace { flex: 1; display: flex; min-height: 0; position: relative; }
.rail { width: 108px; flex: none; border-right: 4px solid #16191c; padding-top: 9px; background: linear-gradient(90deg, #131618, #101115 20px); color: #737a86; }
.rail h2 { font-size: 20px; line-height: 24px; text-align: center; color: #7c7f83; padding-bottom: 5px; }
.rail hr { border: 0; border-top: 2px solid #22282c; margin: 0 4px 9px; }
.rail button { width: 100%; height: 84px; }
.rail .on { color: #c4c4c8; }
.rail .on span { display: flex; align-items: center; justify-content: center; width: 76px; height: 76px; border-radius: 16px; background: #3528a6; }

.treepanel { width: 560px; flex: none; color: #686d74; }
.treehead { height: 122px; display: flex; align-items: center; padding: 6px 30px 0 20px; gap: 24px; }
.treehead h2 { font-size: 28px; padding-left: 6px; }
.treeacts { display: flex; margin-left: auto; gap: 31px; align-items: center; }
.treesearch { display: flex; align-items: center; gap: 24px; height: 72px; background: #171b1e; padding: 0 24px; font-size: 28px; }
.treesearch input { flex: 1; }
input::placeholder { color: #5f646c; opacity: 1; }
.tree { padding-top: 24px; font-size: 26px; }
.tree li { --guide: #24292d; display: flex; align-items: center; height: 64px; padding-right: 28px; padding-left: calc(23px + var(--d) * 19px); background: repeating-linear-gradient(90deg, var(--guide) 0 2px, transparent 2px 20px) 20px 0 / calc(var(--d) * 20px) 100% no-repeat; }
.d0 { --d: 0; } .d1 { --d: 1; } .d2 { --d: 2; } .d3 { --d: 3; } .d4 { --d: 4; } .d5 { --d: 5; }
.tree li span { margin: 0 15px 0 17px; }
.tree li > .i34.ic, .btnic { margin: 0 2px; }
.tree li > .i32.ic { margin: 0 3px; }
.btnic { display: grid; place-items: center; }
.btnic > * { grid-area: 1 / 1; }
.btnic small { font-size: 11px; line-height: 12px; }
.add { margin-left: auto; }
.car { margin-left: 28px; }
.tree li > span + .car { margin-left: auto; }
.tree li.hover { background-color: #171b1e; border-radius: 16px 16px 0 0; }
.tree li.sel { background-color: #293c3f; border-radius: 16px; color: #b9b9b9; font-weight: 700; }
.splitter { width: 20px; flex: none; background: #1d2125; display: flex; align-items: center; justify-content: center; }
.splitter i { width: 10px; height: 60px; border-radius: 5px; background: #737a86; }

/* canvas */
.canvas { flex: 1; min-width: 0; background: #161a1d; display: flex; flex-direction: column; }
.bar { display: flex; align-items: center; padding: 16px 16px 8px; }
.float { background: #101115; border-radius: 16px; height: 72px; box-shadow: 0 4px 8px #0f1214; }
.sqf { width: 72px; }
.zoom { width: 208px; margin-left: 16px; display: flex; align-items: center; justify-content: space-around; font-size: 32px; font-weight: 700; }
.zoom svg { color: #8d8f91; stroke-width: 2.5; }
.devices { display: flex; align-items: center; margin: 0 auto; border: 2px solid #22272b; border-radius: 18px; background: #101115; height: 84px; padding: 4px; color: #68707a; }
.devices button { width: 72px; height: 72px; border-radius: 14px; }
.devices .on { background: #202529; color: #b9b9b9; }
.devices p { display: flex; flex-direction: column; font-size: 24px; line-height: 34px; padding: 0 14px; }
.devices strong { color: #b9b9b9; }
.devices > svg { margin-right: 18px; }
.bar > .sqf:last-child { margin-left: 16px; }
.stage { flex: 1; min-height: 0; display: grid; grid-template-columns: 1fr 708px 1fr; padding-left: 24px; }
.phone { grid-column: 2; background: #b9b9b9; border-radius: 14px 14px 0 0; font: 25px/32px "Noto Sans", sans-serif; overflow: hidden; }
.appbar { height: 208px; border-bottom: 2px solid #929292; padding: 142px 36px 0; color: #101215; }
.formrow { display: flex; padding: 9px 20px 10px 15px; gap: 12px; align-items: center; }
.formrow input { flex: 1; height: 90px; border: 3px solid #68c9bb; border-radius: 8px; background: #a5b2b3; padding: 0 24px; }
.formrow input::placeholder { color: #46565a; }
.formrow button { width: 112px; height: 72px; background: #a36339; border-radius: 14px; }
.list { background: #b1b2b5; }
.list li { height: 90px; padding: 0 15px; display: flex; align-items: center; color: #77797c; }
.list .first { background: #adaeb1; color: #17191b; }
.picked { position: relative; border: 3px solid #2f6d66; line-height: 32px; margin-right: 15px; background: #aeafb2; box-shadow: 0 8px #7a9190, 0 -8px #7a9190, 15px 0 #7a9190, -15px 0 #7a9190; }
.picked em { position: absolute; left: -3px; bottom: 35px; background: #366c66; border: 2px solid #2a5a54; border-bottom: 0; border-radius: 7px 7px 0 0; color: #b9b9b9; padding: 0 7px; font: 23px/34px Lato, sans-serif; }
.addbar { width: 60px; height: 60px; border-radius: 14px; background: #202529; margin-left: 28px; }
.scroll { width: 24px; flex: none; background: #23272e; border: 2px solid #23272b; border-width: 0 2px; }
.scroll i { display: block; height: calc(100% - 166px); border-radius: 10px; background: #0a0b0d; }

/* properties */
.props { width: 600px; flex: none; overflow: hidden; }
.props section { padding: 20px 24px; border-bottom: 2px solid #23282d; }
.props input[type=text] { border: 2px solid #23282d; border-radius: 14px; height: 64px; padding: 0 22px; width: 100%; font-weight: 700; }
.props h3, .props label, .lab, .resp > span { display: flex; align-items: center; gap: 6px; height: 32px; }
.props label, .lab, .resp > span { color: #64696f; }
.props .strong { color: #b9b9b9; font-weight: 700; }
.chev { margin-left: auto; margin-right: 4px; color: #747a81; }
.props .p1 { padding-top: 12px; }
.p1 h2 { display: flex; align-items: center; gap: 12px; }
.namerow { display: flex; gap: 12px; margin-top: 16px; }
.props .namerow input { flex: 1; background: #050809; font-weight: 400; }
.namerow button { width: 64px; height: 64px; border: 2px solid #22282d; background: #161a1d; border-radius: 14px; }
.tabs { display: grid; grid-template-columns: repeat(5, 1fr); gap: 8px; margin: 22px 0 30px; background: #161a1d; border-radius: 16px; padding: 4px; height: 72px; color: #686d74; }
.tabs button { border-radius: 12px; }
.tabs .on { background: #08090b; color: #b9b9b9; }
.theme { width: 100%; height: 64px; margin-top: 24px; background: #262b32; border-radius: 16px; font-size: 28px; font-weight: 700; }
.p2 input { margin-top: 8px; }
.props .p3 { padding: 21px 24px; }
.r { display: flex; align-items: center; justify-content: space-between; }
.cond { margin-top: 20px; align-items: flex-start; }
.cond label { margin-top: 6px; }
input[type=checkbox] { appearance: none; width: 84px; height: 50px; border: 2px solid #202428; border-radius: 25px; background: radial-gradient(circle at 23px 23px, #202529 21px, transparent 22px); }
.resp { margin-top: 12px; height: 64px; }
.resp > span { align-self: flex-start; margin-top: 5px; }
.devs { display: flex; gap: 38px; margin-right: 4px; }
.vgap { margin-left: 8px; }
.opl { margin-top: 9px; }
.slide { margin-top: 8px; gap: 20px; padding-left: 12px; }
.props .slide input[type=text] { width: 184px; font-weight: 400; }
input[type=range] { appearance: none; flex: 1; height: 24px; background: linear-gradient(#3528a6, #3528a6) 0 7px / calc(100% - 12px) 10px no-repeat; border-radius: 5px; }
input[type=range]::-webkit-slider-thumb { appearance: none; width: 24px; height: 24px; border-radius: 50%; background: #b9b9b9; }
.anim { margin-top: 17px; }
.props .p4 { border: 0; padding-top: 22px; }
.expand { display: grid; grid-template-columns: 264px 120px; gap: 24px; margin-top: 18px; }
.props input.faint { margin-top: 8px; border-color: #1a1d21; }
.exps { display: flex; gap: 28px; padding: 20px 2px 0; color: #686d74; }
.exps .on { color: #b9b9b9; }
.padrow { display: flex; align-items: center; height: 44px; margin: 24px 10px 8px 0; color: #747a81; gap: 18px; }
.seg { display: flex; border: 2px solid #23282d; border-radius: 10px; height: 46px; margin-left: 4px; }
.seg button { width: 50px; }
.seg .on { width: 62px; background: #a8694a; color: #d0c4bc; border-radius: 10px; }
.push { margin-left: auto; }
.padbox { display: grid; grid-template: 14px 1fr 1fr 14px / 24px 94px 1fr 108px 24px; height: 164px; border: 2px solid #23282d; border-radius: 14px; padding: 4px; align-items: center; justify-items: center; color: #747a81; }
.padbox input { width: 80px; text-align: center; font-weight: 700; color: #b9b9b9; }
.pt { grid-area: 1 / 3; } .nt { grid-area: 2 / 3; } .nb { grid-area: 3 / 3; } .pb { grid-area: 4 / 3; transform: rotate(180deg); }
.pl { grid-area: 2 / 1 / 4 / 2; transform: rotate(-90deg); } .nl { grid-area: 2 / 2 / 4 / 3; } .nr { grid-area: 2 / 4 / 4 / 5; } .pr { grid-area: 2 / 5 / 4 / 6; transform: rotate(90deg); }
.align { display: grid; grid-template-columns: 264px 120px 120px; gap: 24px; margin-top: 16px; }
.align .push { color: #747a81; }
.dots { display: grid; grid-template-columns: repeat(3, 16px); justify-content: space-between; row-gap: 43px; padding: 19px 20px; border: 2px solid #23282d; border-radius: 14px; margin-top: 8px; }
.dots input { appearance: none; width: 16px; height: 16px; border-radius: 4px; background: #22272e; }
.xy { padding-top: 55px; }
.xy input { margin-top: 9px; }

/* variable popover */
.popover { position: absolute; right: 622px; top: 342px; width: 620px; border: 4px solid #363c46; border-radius: 16px; background: #15191b; color: #fff; font-weight: 700; }
.grip { position: absolute; left: 284px; width: 40px; height: 8px; border-radius: 4px; background: #98a1ae; }
.grip.top { top: -7px; }
.grip.bottom { bottom: -7px; }
.tip { position: absolute; left: 616px; top: 111px; width: 36px; height: 50px; color: #363c46; }
.pophead { background: #282c34; border-bottom: 4px solid #363c46; border-radius: 12px 12px 0 0; padding: 20px 20px 18px; }
.poptitle { display: flex; justify-content: space-between; align-items: center; padding: 0 12px 0 16px; }
.poptitle p { font-size: 24px; color: #8d97a8; }
.poptitle h2 { font-size: 27px; line-height: 40px; }
.poptitle button, .end { color: #98a1ae; }
.popsearch { display: flex; align-items: center; gap: 16px; height: 82px; margin-top: 18px; padding: 0 30px; border: 2px solid #2f343c; border-radius: 14px; background: #0a0e12; color: #343941; font-size: 28px; font-weight: 400; }
.popsearch input::placeholder { color: #5a5b5c; }
.popbody { padding: 23px 0 2px 24px; }
.popbody p { font-size: 25px; font-weight: 400; color: #8d97a8; }
.srcrow { width: 100%; height: 78px; gap: 26px; justify-content: flex-start; padding: 0 26px 0 11px; }
.srcrow:first-of-type { margin-top: 8px; }
.srcrow span + svg { margin-left: -10px; }
.srcrow .end, .srcrow span + svg.end { margin-left: auto; }
.opts { border-left: 2px solid #2a2e35; }
.opts p { padding: 12px 20px 11px; }
.opts li { display: flex; align-items: center; height: 66px; padding-left: 23px; border-bottom: 2px solid #2a2e35; font-size: 25px; }
.opts li svg { width: 32px; }
.opts li span { margin-left: 17px; }
.opts li svg + span { margin-left: 27px; }

.intercom { position: fixed; right: 40px; bottom: 40px; width: 96px; height: 96px; border-radius: 50%; background: #4838e6; color: #fff; box-shadow: 0 4px 24px #0a0b0e; }
```
